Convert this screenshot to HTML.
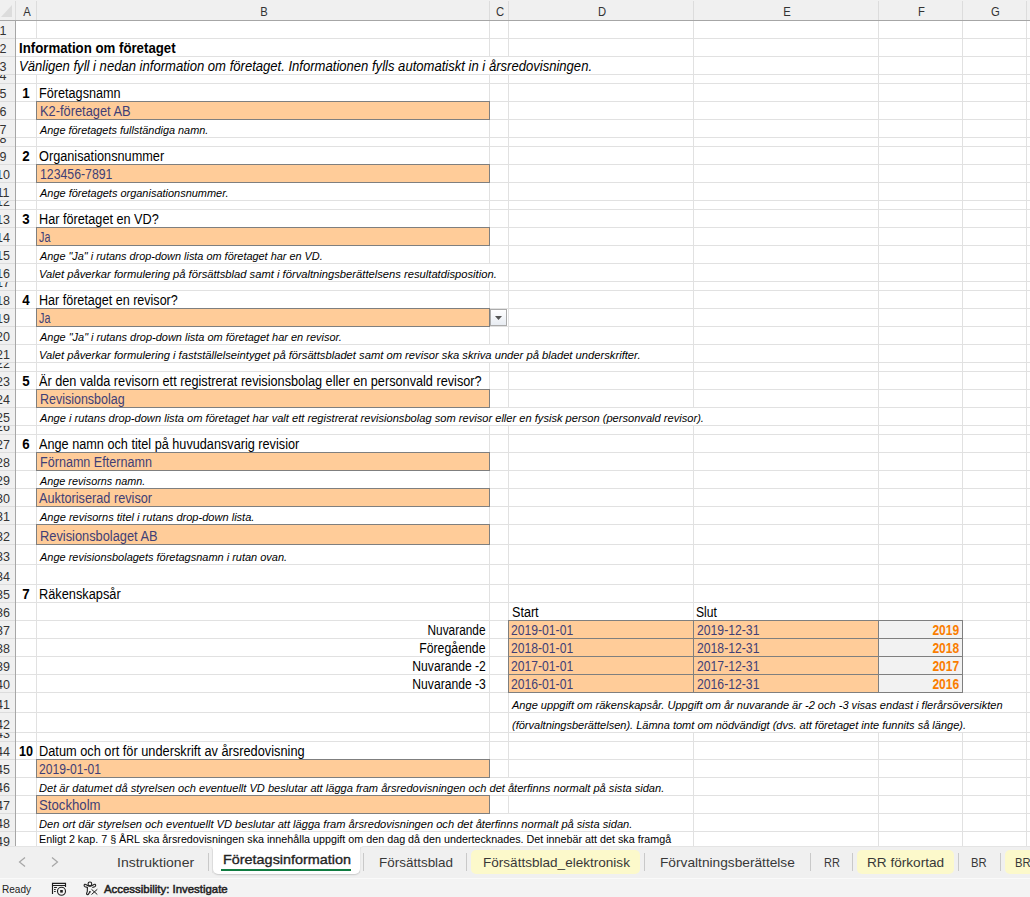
<!DOCTYPE html><html><head><meta charset="utf-8"><style>
html,body{margin:0;padding:0;}body{width:1030px;height:897px;overflow:hidden;position:relative;background:#fff;font-family:"Liberation Sans",sans-serif;}
.a{position:absolute;}.t{position:absolute;white-space:nowrap;line-height:20px;transform-origin:0 0;}
.h{position:absolute;top:2px;height:20px;line-height:20px;font-size:12.5px;color:#333;text-align:center;transform:scaleX(0.9);}
.rn{position:absolute;left:-17px;width:40px;overflow:hidden;}
.rn div{position:absolute;left:0;width:40px;text-align:center;font-size:12.5px;line-height:20px;color:#333;}
</style></head><body>
<div class="a" style="left:0;top:0;width:1030px;height:20px;background:#F0F0F0"></div>
<div class="a" style="left:0;top:20px;width:15px;height:826px;background:#F0F0F0"></div>
<svg class="a" style="left:0;top:0" width="15" height="20"><polygon points="12,5 12,17 1,17" fill="#DCDCDC"/></svg>
<div class="a" style="left:36px;top:1px;width:1px;height:19px;background:#DCDCDC"></div>
<div class="a" style="left:489px;top:1px;width:1px;height:19px;background:#DCDCDC"></div>
<div class="a" style="left:508px;top:1px;width:1px;height:19px;background:#DCDCDC"></div>
<div class="a" style="left:693px;top:1px;width:1px;height:19px;background:#DCDCDC"></div>
<div class="a" style="left:878px;top:1px;width:1px;height:19px;background:#DCDCDC"></div>
<div class="a" style="left:962px;top:1px;width:1px;height:19px;background:#DCDCDC"></div>
<div class="a" style="left:1026px;top:1px;width:1px;height:19px;background:#DCDCDC"></div>
<div class="h" style="left:16.6px;width:20px">A</div>
<div class="h" style="left:37.6px;width:452px">B</div>
<div class="h" style="left:490.6px;width:18px">C</div>
<div class="h" style="left:509.6px;width:184px">D</div>
<div class="h" style="left:694.6px;width:184px">E</div>
<div class="h" style="left:879.6px;width:83px">F</div>
<div class="h" style="left:963.6px;width:63px">G</div>
<div class="a" style="left:16px;top:38px;width:1014px;height:1px;background:#E1E1E1"></div>
<div class="a" style="left:0;top:38px;width:15px;height:1px;background:#DCDCDC"></div>
<div class="a" style="left:16px;top:56px;width:1014px;height:1px;background:#E1E1E1"></div>
<div class="a" style="left:0;top:56px;width:15px;height:1px;background:#DCDCDC"></div>
<div class="a" style="left:16px;top:74px;width:1014px;height:1px;background:#E1E1E1"></div>
<div class="a" style="left:0;top:74px;width:15px;height:1px;background:#DCDCDC"></div>
<div class="a" style="left:16px;top:83px;width:1014px;height:1px;background:#E1E1E1"></div>
<div class="a" style="left:0;top:83px;width:15px;height:1px;background:#DCDCDC"></div>
<div class="a" style="left:16px;top:101px;width:1014px;height:1px;background:#E1E1E1"></div>
<div class="a" style="left:0;top:101px;width:15px;height:1px;background:#DCDCDC"></div>
<div class="a" style="left:16px;top:119px;width:1014px;height:1px;background:#E1E1E1"></div>
<div class="a" style="left:0;top:119px;width:15px;height:1px;background:#DCDCDC"></div>
<div class="a" style="left:16px;top:137px;width:1014px;height:1px;background:#E1E1E1"></div>
<div class="a" style="left:0;top:137px;width:15px;height:1px;background:#DCDCDC"></div>
<div class="a" style="left:16px;top:146px;width:1014px;height:1px;background:#E1E1E1"></div>
<div class="a" style="left:0;top:146px;width:15px;height:1px;background:#DCDCDC"></div>
<div class="a" style="left:16px;top:164px;width:1014px;height:1px;background:#E1E1E1"></div>
<div class="a" style="left:0;top:164px;width:15px;height:1px;background:#DCDCDC"></div>
<div class="a" style="left:16px;top:182px;width:1014px;height:1px;background:#E1E1E1"></div>
<div class="a" style="left:0;top:182px;width:15px;height:1px;background:#DCDCDC"></div>
<div class="a" style="left:16px;top:200px;width:1014px;height:1px;background:#E1E1E1"></div>
<div class="a" style="left:0;top:200px;width:15px;height:1px;background:#DCDCDC"></div>
<div class="a" style="left:16px;top:209px;width:1014px;height:1px;background:#E1E1E1"></div>
<div class="a" style="left:0;top:209px;width:15px;height:1px;background:#DCDCDC"></div>
<div class="a" style="left:16px;top:227px;width:1014px;height:1px;background:#E1E1E1"></div>
<div class="a" style="left:0;top:227px;width:15px;height:1px;background:#DCDCDC"></div>
<div class="a" style="left:16px;top:245px;width:1014px;height:1px;background:#E1E1E1"></div>
<div class="a" style="left:0;top:245px;width:15px;height:1px;background:#DCDCDC"></div>
<div class="a" style="left:16px;top:263px;width:1014px;height:1px;background:#E1E1E1"></div>
<div class="a" style="left:0;top:263px;width:15px;height:1px;background:#DCDCDC"></div>
<div class="a" style="left:16px;top:281px;width:1014px;height:1px;background:#E1E1E1"></div>
<div class="a" style="left:0;top:281px;width:15px;height:1px;background:#DCDCDC"></div>
<div class="a" style="left:16px;top:290px;width:1014px;height:1px;background:#E1E1E1"></div>
<div class="a" style="left:0;top:290px;width:15px;height:1px;background:#DCDCDC"></div>
<div class="a" style="left:16px;top:308px;width:1014px;height:1px;background:#E1E1E1"></div>
<div class="a" style="left:0;top:308px;width:15px;height:1px;background:#DCDCDC"></div>
<div class="a" style="left:16px;top:326px;width:1014px;height:1px;background:#E1E1E1"></div>
<div class="a" style="left:0;top:326px;width:15px;height:1px;background:#DCDCDC"></div>
<div class="a" style="left:16px;top:344px;width:1014px;height:1px;background:#E1E1E1"></div>
<div class="a" style="left:0;top:344px;width:15px;height:1px;background:#DCDCDC"></div>
<div class="a" style="left:16px;top:362px;width:1014px;height:1px;background:#E1E1E1"></div>
<div class="a" style="left:0;top:362px;width:15px;height:1px;background:#DCDCDC"></div>
<div class="a" style="left:16px;top:371px;width:1014px;height:1px;background:#E1E1E1"></div>
<div class="a" style="left:0;top:371px;width:15px;height:1px;background:#DCDCDC"></div>
<div class="a" style="left:16px;top:389px;width:1014px;height:1px;background:#E1E1E1"></div>
<div class="a" style="left:0;top:389px;width:15px;height:1px;background:#DCDCDC"></div>
<div class="a" style="left:16px;top:407px;width:1014px;height:1px;background:#E1E1E1"></div>
<div class="a" style="left:0;top:407px;width:15px;height:1px;background:#DCDCDC"></div>
<div class="a" style="left:16px;top:425px;width:1014px;height:1px;background:#E1E1E1"></div>
<div class="a" style="left:0;top:425px;width:15px;height:1px;background:#DCDCDC"></div>
<div class="a" style="left:16px;top:434px;width:1014px;height:1px;background:#E1E1E1"></div>
<div class="a" style="left:0;top:434px;width:15px;height:1px;background:#DCDCDC"></div>
<div class="a" style="left:16px;top:452px;width:1014px;height:1px;background:#E1E1E1"></div>
<div class="a" style="left:0;top:452px;width:15px;height:1px;background:#DCDCDC"></div>
<div class="a" style="left:16px;top:470px;width:1014px;height:1px;background:#E1E1E1"></div>
<div class="a" style="left:0;top:470px;width:15px;height:1px;background:#DCDCDC"></div>
<div class="a" style="left:16px;top:488px;width:1014px;height:1px;background:#E1E1E1"></div>
<div class="a" style="left:0;top:488px;width:15px;height:1px;background:#DCDCDC"></div>
<div class="a" style="left:16px;top:506px;width:1014px;height:1px;background:#E1E1E1"></div>
<div class="a" style="left:0;top:506px;width:15px;height:1px;background:#DCDCDC"></div>
<div class="a" style="left:16px;top:524px;width:1014px;height:1px;background:#E1E1E1"></div>
<div class="a" style="left:0;top:524px;width:15px;height:1px;background:#DCDCDC"></div>
<div class="a" style="left:16px;top:544px;width:1014px;height:1px;background:#E1E1E1"></div>
<div class="a" style="left:0;top:544px;width:15px;height:1px;background:#DCDCDC"></div>
<div class="a" style="left:16px;top:564px;width:1014px;height:1px;background:#E1E1E1"></div>
<div class="a" style="left:0;top:564px;width:15px;height:1px;background:#DCDCDC"></div>
<div class="a" style="left:16px;top:584px;width:1014px;height:1px;background:#E1E1E1"></div>
<div class="a" style="left:0;top:584px;width:15px;height:1px;background:#DCDCDC"></div>
<div class="a" style="left:16px;top:602px;width:1014px;height:1px;background:#E1E1E1"></div>
<div class="a" style="left:0;top:602px;width:15px;height:1px;background:#DCDCDC"></div>
<div class="a" style="left:16px;top:620px;width:1014px;height:1px;background:#E1E1E1"></div>
<div class="a" style="left:0;top:620px;width:15px;height:1px;background:#DCDCDC"></div>
<div class="a" style="left:16px;top:638px;width:1014px;height:1px;background:#E1E1E1"></div>
<div class="a" style="left:0;top:638px;width:15px;height:1px;background:#DCDCDC"></div>
<div class="a" style="left:16px;top:656px;width:1014px;height:1px;background:#E1E1E1"></div>
<div class="a" style="left:0;top:656px;width:15px;height:1px;background:#DCDCDC"></div>
<div class="a" style="left:16px;top:674px;width:1014px;height:1px;background:#E1E1E1"></div>
<div class="a" style="left:0;top:674px;width:15px;height:1px;background:#DCDCDC"></div>
<div class="a" style="left:16px;top:692px;width:1014px;height:1px;background:#E1E1E1"></div>
<div class="a" style="left:0;top:692px;width:15px;height:1px;background:#DCDCDC"></div>
<div class="a" style="left:16px;top:712px;width:1014px;height:1px;background:#E1E1E1"></div>
<div class="a" style="left:0;top:712px;width:15px;height:1px;background:#DCDCDC"></div>
<div class="a" style="left:16px;top:732px;width:1014px;height:1px;background:#E1E1E1"></div>
<div class="a" style="left:0;top:732px;width:15px;height:1px;background:#DCDCDC"></div>
<div class="a" style="left:16px;top:741px;width:1014px;height:1px;background:#E1E1E1"></div>
<div class="a" style="left:0;top:741px;width:15px;height:1px;background:#DCDCDC"></div>
<div class="a" style="left:16px;top:759px;width:1014px;height:1px;background:#E1E1E1"></div>
<div class="a" style="left:0;top:759px;width:15px;height:1px;background:#DCDCDC"></div>
<div class="a" style="left:16px;top:777px;width:1014px;height:1px;background:#E1E1E1"></div>
<div class="a" style="left:0;top:777px;width:15px;height:1px;background:#DCDCDC"></div>
<div class="a" style="left:16px;top:795px;width:1014px;height:1px;background:#E1E1E1"></div>
<div class="a" style="left:0;top:795px;width:15px;height:1px;background:#DCDCDC"></div>
<div class="a" style="left:16px;top:813px;width:1014px;height:1px;background:#E1E1E1"></div>
<div class="a" style="left:0;top:813px;width:15px;height:1px;background:#DCDCDC"></div>
<div class="a" style="left:16px;top:831px;width:1014px;height:1px;background:#E1E1E1"></div>
<div class="a" style="left:0;top:831px;width:15px;height:1px;background:#DCDCDC"></div>
<div class="a" style="left:36px;top:21px;width:1px;height:825px;background:#E1E1E1"></div>
<div class="a" style="left:489px;top:21px;width:1px;height:825px;background:#E1E1E1"></div>
<div class="a" style="left:508px;top:21px;width:1px;height:825px;background:#E1E1E1"></div>
<div class="a" style="left:693px;top:21px;width:1px;height:825px;background:#E1E1E1"></div>
<div class="a" style="left:878px;top:21px;width:1px;height:825px;background:#E1E1E1"></div>
<div class="a" style="left:962px;top:21px;width:1px;height:825px;background:#E1E1E1"></div>
<div class="a" style="left:1026px;top:21px;width:1px;height:825px;background:#E1E1E1"></div>
<div class="a" style="left:16px;top:39px;width:473px;height:17px;background:#fff"></div>
<div class="a" style="left:16px;top:57px;width:677px;height:17px;background:#fff"></div>
<div class="a" style="left:37px;top:264px;width:471px;height:17px;background:#fff"></div>
<div class="a" style="left:37px;top:345px;width:656px;height:17px;background:#fff"></div>
<div class="a" style="left:37px;top:408px;width:841px;height:17px;background:#fff"></div>
<div class="a" style="left:509px;top:693px;width:517px;height:19px;background:#fff"></div>
<div class="a" style="left:509px;top:713px;width:517px;height:19px;background:#fff"></div>
<div class="a" style="left:37px;top:778px;width:656px;height:17px;background:#fff"></div>
<div class="a" style="left:37px;top:814px;width:656px;height:17px;background:#fff"></div>
<div class="a" style="left:37px;top:832px;width:656px;height:17px;background:#fff"></div>
<div class="a" style="left:0;top:20px;width:1030px;height:1px;background:#A6A6A6"></div>
<div class="a" style="left:15px;top:20px;width:1px;height:826px;background:#A6A6A6"></div>
<div class="a" style="left:15px;top:1px;width:1px;height:19px;background:#DCDCDC"></div>
<div class="rn" style="top:21px;height:17px"><div style="top:-0.33px">1</div></div>
<div class="rn" style="top:39px;height:17px"><div style="top:-0.33px">2</div></div>
<div class="rn" style="top:57px;height:17px"><div style="top:-0.33px">3</div></div>
<div class="rn" style="top:75px;height:8px"><div style="top:-9.33px">4</div></div>
<div class="rn" style="top:84px;height:17px"><div style="top:-0.33px">5</div></div>
<div class="rn" style="top:102px;height:17px"><div style="top:-0.33px">6</div></div>
<div class="rn" style="top:120px;height:17px"><div style="top:-0.33px">7</div></div>
<div class="rn" style="top:138px;height:8px"><div style="top:-9.33px">8</div></div>
<div class="rn" style="top:147px;height:17px"><div style="top:-0.33px">9</div></div>
<div class="rn" style="top:165px;height:17px"><div style="top:-0.33px">10</div></div>
<div class="rn" style="top:183px;height:17px"><div style="top:-0.33px">11</div></div>
<div class="rn" style="top:201px;height:8px"><div style="top:-9.33px">12</div></div>
<div class="rn" style="top:210px;height:17px"><div style="top:-0.33px">13</div></div>
<div class="rn" style="top:228px;height:17px"><div style="top:-0.33px">14</div></div>
<div class="rn" style="top:246px;height:17px"><div style="top:-0.33px">15</div></div>
<div class="rn" style="top:264px;height:17px"><div style="top:-0.33px">16</div></div>
<div class="rn" style="top:282px;height:8px"><div style="top:-9.33px">17</div></div>
<div class="rn" style="top:291px;height:17px"><div style="top:-0.33px">18</div></div>
<div class="rn" style="top:309px;height:17px"><div style="top:-0.33px">19</div></div>
<div class="rn" style="top:327px;height:17px"><div style="top:-0.33px">20</div></div>
<div class="rn" style="top:345px;height:17px"><div style="top:-0.33px">21</div></div>
<div class="rn" style="top:363px;height:8px"><div style="top:-9.33px">22</div></div>
<div class="rn" style="top:372px;height:17px"><div style="top:-0.33px">23</div></div>
<div class="rn" style="top:390px;height:17px"><div style="top:-0.33px">24</div></div>
<div class="rn" style="top:408px;height:17px"><div style="top:-0.33px">25</div></div>
<div class="rn" style="top:426px;height:8px"><div style="top:-9.33px">26</div></div>
<div class="rn" style="top:435px;height:17px"><div style="top:-0.33px">27</div></div>
<div class="rn" style="top:453px;height:17px"><div style="top:-0.33px">28</div></div>
<div class="rn" style="top:471px;height:17px"><div style="top:-0.33px">29</div></div>
<div class="rn" style="top:489px;height:17px"><div style="top:-0.33px">30</div></div>
<div class="rn" style="top:507px;height:17px"><div style="top:-0.33px">31</div></div>
<div class="rn" style="top:525px;height:19px"><div style="top:1.67px">32</div></div>
<div class="rn" style="top:545px;height:19px"><div style="top:1.67px">33</div></div>
<div class="rn" style="top:565px;height:19px"><div style="top:1.67px">34</div></div>
<div class="rn" style="top:585px;height:17px"><div style="top:-0.33px">35</div></div>
<div class="rn" style="top:603px;height:17px"><div style="top:-0.33px">36</div></div>
<div class="rn" style="top:621px;height:17px"><div style="top:-0.33px">37</div></div>
<div class="rn" style="top:639px;height:17px"><div style="top:-0.33px">38</div></div>
<div class="rn" style="top:657px;height:17px"><div style="top:-0.33px">39</div></div>
<div class="rn" style="top:675px;height:17px"><div style="top:-0.33px">40</div></div>
<div class="rn" style="top:693px;height:19px"><div style="top:1.67px">41</div></div>
<div class="rn" style="top:713px;height:19px"><div style="top:1.67px">42</div></div>
<div class="rn" style="top:733px;height:8px"><div style="top:-9.33px">43</div></div>
<div class="rn" style="top:742px;height:17px"><div style="top:-0.33px">44</div></div>
<div class="rn" style="top:760px;height:17px"><div style="top:-0.33px">45</div></div>
<div class="rn" style="top:778px;height:17px"><div style="top:-0.33px">46</div></div>
<div class="rn" style="top:796px;height:17px"><div style="top:-0.33px">47</div></div>
<div class="rn" style="top:814px;height:17px"><div style="top:-0.33px">48</div></div>
<div class="rn" style="top:832px;height:17px"><div style="top:-0.33px">49</div></div>
<div class="a" style="left:36px;top:101px;width:452px;height:17px;background:#FFCC99;border:1px solid #7F7F7F"></div>
<div class="a" style="left:36px;top:164px;width:452px;height:17px;background:#FFCC99;border:1px solid #7F7F7F"></div>
<div class="a" style="left:36px;top:227px;width:452px;height:17px;background:#FFCC99;border:1px solid #7F7F7F"></div>
<div class="a" style="left:36px;top:308px;width:452px;height:17px;background:#FFCC99;border:1px solid #7F7F7F"></div>
<div class="a" style="left:36px;top:389px;width:452px;height:17px;background:#FFCC99;border:1px solid #7F7F7F"></div>
<div class="a" style="left:36px;top:452px;width:452px;height:17px;background:#FFCC99;border:1px solid #7F7F7F"></div>
<div class="a" style="left:36px;top:488px;width:452px;height:17px;background:#FFCC99;border:1px solid #7F7F7F"></div>
<div class="a" style="left:36px;top:524px;width:452px;height:19px;background:#FFCC99;border:1px solid #7F7F7F"></div>
<div class="a" style="left:36px;top:759px;width:452px;height:17px;background:#FFCC99;border:1px solid #7F7F7F"></div>
<div class="a" style="left:36px;top:795px;width:452px;height:17px;background:#FFCC99;border:1px solid #7F7F7F"></div>
<div class="a" style="left:508px;top:620px;width:184px;height:17px;background:#FFCC99;border:1px solid #7F7F7F"></div>
<div class="a" style="left:693px;top:620px;width:184px;height:17px;background:#FFCC99;border:1px solid #7F7F7F"></div>
<div class="a" style="left:508px;top:638px;width:184px;height:17px;background:#FFCC99;border:1px solid #7F7F7F"></div>
<div class="a" style="left:693px;top:638px;width:184px;height:17px;background:#FFCC99;border:1px solid #7F7F7F"></div>
<div class="a" style="left:508px;top:656px;width:184px;height:17px;background:#FFCC99;border:1px solid #7F7F7F"></div>
<div class="a" style="left:693px;top:656px;width:184px;height:17px;background:#FFCC99;border:1px solid #7F7F7F"></div>
<div class="a" style="left:508px;top:674px;width:184px;height:17px;background:#FFCC99;border:1px solid #7F7F7F"></div>
<div class="a" style="left:693px;top:674px;width:184px;height:17px;background:#FFCC99;border:1px solid #7F7F7F"></div>
<div class="a" style="left:878px;top:620px;width:83px;height:17px;background:#F2F2F2;border:1px solid #7F7F7F"></div>
<div class="a" style="left:878px;top:638px;width:83px;height:17px;background:#F2F2F2;border:1px solid #7F7F7F"></div>
<div class="a" style="left:878px;top:656px;width:83px;height:17px;background:#F2F2F2;border:1px solid #7F7F7F"></div>
<div class="a" style="left:878px;top:674px;width:83px;height:17px;background:#F2F2F2;border:1px solid #7F7F7F"></div>
<div class="a" style="left:490px;top:309px;width:15px;height:15px;border:1px solid #ABABAB;background:linear-gradient(#FFFFFF,#E8ECF2)"></div>
<svg class="a" style="left:494px;top:315px" width="9" height="6"><polygon points="1,1 8,1 4.5,5" fill="#555"/></svg>
<div class="a" style="left:0;top:866px;width:1030px;height:12px;background:#F0F0F0"></div>
<div class="a" style="left:-10px;top:846px;width:222px;height:31px;background:#F0F0F0;border-top-right-radius:5px;border-top:1px solid #E4E4E4;border-right:1px solid #E4E4E4"></div>
<div class="a" style="left:359px;top:846px;width:700px;height:31px;background:#F0F0F0;border-top-left-radius:5px;border-top:1px solid #E4E4E4;border-left:1px solid #E4E4E4"></div>
<div class="a" style="left:0;top:873px;width:1030px;height:5px;background:#F0F0F0"></div>
<div class="a" style="left:0;top:878px;width:1030px;height:1px;background:#FAFAFA"></div>
<div class="a" style="left:0;top:879px;width:1030px;height:18px;background:#F3F3F3"></div>
<svg class="a" style="left:0;top:846px" width="80" height="32"><polyline points="25,11.5 19.5,16 25,20.5" fill="none" stroke="#A6A6A6" stroke-width="1.2"/><polyline points="52,11.5 57.5,16 52,20.5" fill="none" stroke="#A6A6A6" stroke-width="1.2"/></svg>
<div class="a" style="left:208px;top:853px;width:1px;height:18px;background:#C9C9C9"></div>
<div class="a" style="left:363px;top:853px;width:1px;height:18px;background:#C9C9C9"></div>
<div class="a" style="left:466px;top:853px;width:1px;height:18px;background:#C9C9C9"></div>
<div class="a" style="left:644px;top:853px;width:1px;height:18px;background:#C9C9C9"></div>
<div class="a" style="left:810px;top:853px;width:1px;height:18px;background:#C9C9C9"></div>
<div class="a" style="left:852px;top:853px;width:1px;height:18px;background:#C9C9C9"></div>
<div class="a" style="left:958px;top:853px;width:1px;height:18px;background:#C9C9C9"></div>
<div class="a" style="left:1000px;top:853px;width:1px;height:18px;background:#C9C9C9"></div>
<div class="a" style="left:212.5px;top:846px;width:147px;height:28px;background:#FFFFFF;border-radius:0 0 5px 5px;box-shadow:0 0.5px 1.5px rgba(0,0,0,0.16)"></div>
<div class="a" style="left:208px;top:840px;width:156px;height:6px;background:#FFFFFF"></div>
<div class="a" style="left:221px;top:869px;width:130px;height:2px;background:#107C41"></div>
<div class="a" style="left:471px;top:850px;width:169px;height:24px;background:#FCF9CB;border-radius:5px"></div>
<div class="a" style="left:857px;top:850px;width:97px;height:24px;background:#FCF9CB;border-radius:5px"></div>
<div class="a" style="left:1005px;top:850px;width:35px;height:24px;background:#FCF9CB;border-radius:5px"></div>
<svg class="a" style="left:48px;top:879px" width="22" height="18"><path d="M4.5 15 V4.4 H17.5 V8 M4.5 6.5 H17.5" stroke="#1E1E1E" stroke-width="1.15" fill="none"/><path d="M6.1 8.5 H8.9 M6.1 10.5 H7.7 M6.1 12.5 H7.7" stroke="#1E1E1E" stroke-width="1.05"/><circle cx="13.5" cy="12.3" r="4" stroke="#1E1E1E" stroke-width="1.1" fill="none"/><rect x="12.2" y="11" width="2.6" height="2.6" fill="#1E1E1E"/></svg>
<svg class="a" style="left:80px;top:879px" width="22" height="18"><circle cx="9.9" cy="4.9" r="1.85" stroke="#1E1E1E" stroke-width="1.1" fill="none"/><path d="M8.6 6.9 Q9.9 7.4 11.2 6.9 L14 5.4 Q15.3 4.9 15.7 6.1 Q15.9 7.2 14.7 7.7 L12.3 8.6 M8.6 6.9 L5.8 5.4 Q4.5 4.9 4.1 6.1 Q3.9 7.2 5.1 7.7 L7.4 8.5 L7.3 12.5 L6.6 14.3 Q6.4 15.6 7.5 15.7 Q8.2 15.6 8.8 14.6 L9.6 13.2" stroke="#1E1E1E" stroke-width="1.1" fill="none"/><circle cx="9.9" cy="12.8" r="0.9" fill="#1E1E1E"/><path d="M11.5 10.3 L17.3 15.5 M17.3 10.3 L11.5 15.5" stroke="#1E1E1E" stroke-width="1"/></svg>
<div id="t0" class="t" style="left:18.80px;top:38.37px;font-weight:bold;font-size:14px;color:#000;transform:scaleX(0.9452)">Information om företaget</div>
<div id="t1" class="t" style="left:18.80px;top:56.37px;font-style:italic;font-size:14px;color:#000;transform:scaleX(0.9333)">Vänligen fyll i nedan information om företaget. Informationen fylls automatiskt in i årsredovisningen.</div>
<div id="t2" class="t" style="left:15.90px;width:20px;text-align:center;top:83.37px;font-weight:bold;font-size:14px;color:#000;transform-origin:50% 0;transform:scaleX(0.9500)">1</div>
<div id="t3" class="t" style="left:16.40px;width:20px;text-align:center;top:146.37px;font-weight:bold;font-size:14px;color:#000;transform-origin:50% 0;transform:scaleX(0.9500)">2</div>
<div id="t4" class="t" style="left:16.40px;width:20px;text-align:center;top:209.37px;font-weight:bold;font-size:14px;color:#000;transform-origin:50% 0;transform:scaleX(0.9500)">3</div>
<div id="t5" class="t" style="left:16.40px;width:20px;text-align:center;top:290.37px;font-weight:bold;font-size:14px;color:#000;transform-origin:50% 0;transform:scaleX(0.9500)">4</div>
<div id="t6" class="t" style="left:16.40px;width:20px;text-align:center;top:371.37px;font-weight:bold;font-size:14px;color:#000;transform-origin:50% 0;transform:scaleX(0.9500)">5</div>
<div id="t7" class="t" style="left:16.40px;width:20px;text-align:center;top:434.37px;font-weight:bold;font-size:14px;color:#000;transform-origin:50% 0;transform:scaleX(0.9500)">6</div>
<div id="t8" class="t" style="left:15.90px;width:20px;text-align:center;top:584.37px;font-weight:bold;font-size:14px;color:#000;transform-origin:50% 0;transform:scaleX(0.9500)">7</div>
<div id="t9" class="t" style="left:16.40px;width:20px;text-align:center;top:741.37px;font-weight:bold;font-size:14px;color:#000;transform-origin:50% 0;transform:scaleX(0.9000)">10</div>
<div id="t10" class="t" style="left:39.00px;top:83.37px;font-size:14px;color:#000;transform:scaleX(0.9045)">Företagsnamn</div>
<div id="t11" class="t" style="left:40.00px;top:101.37px;font-size:14px;color:#3F3F76;transform:scaleX(0.9172)">K2-företaget AB</div>
<div id="t12" class="t" style="left:40.00px;top:120.30px;font-style:italic;font-size:11.2px;color:#000;transform:scaleX(0.9734)">Ange företagets fullständiga namn.</div>
<div id="t13" class="t" style="left:39.00px;top:146.37px;font-size:14px;color:#000;transform:scaleX(0.9087)">Organisationsnummer</div>
<div id="t14" class="t" style="left:40.00px;top:164.37px;font-size:14px;color:#3F3F76;transform:scaleX(0.8780)">123456-7891</div>
<div id="t15" class="t" style="left:40.00px;top:183.30px;font-style:italic;font-size:11.2px;color:#000;transform:scaleX(0.9797)">Ange företagets organisationsnummer.</div>
<div id="t16" class="t" style="left:39.00px;top:209.37px;font-size:14px;color:#000;transform:scaleX(0.9053)">Har företaget en VD?</div>
<div id="t17" class="t" style="left:39.00px;top:227.37px;font-size:14px;color:#3F3F76;transform:scaleX(0.7689)">Ja</div>
<div id="t18" class="t" style="left:40.00px;top:246.30px;font-style:italic;font-size:11.2px;color:#000;transform:scaleX(0.9741)">Ange &quot;Ja&quot; i rutans drop-down lista om företaget har en VD.</div>
<div id="t19" class="t" style="left:39.00px;top:264.30px;font-style:italic;font-size:11.2px;color:#000;transform:scaleX(1.0011)">Valet påverkar formulering på försättsblad samt i förvaltningsberättelsens resultatdisposition.</div>
<div id="t20" class="t" style="left:39.00px;top:290.37px;font-size:14px;color:#000;transform:scaleX(0.8961)">Har företaget en revisor?</div>
<div id="t21" class="t" style="left:39.00px;top:308.37px;font-size:14px;color:#3F3F76;transform:scaleX(0.7689)">Ja</div>
<div id="t22" class="t" style="left:40.00px;top:327.30px;font-style:italic;font-size:11.2px;color:#000;transform:scaleX(0.9802)">Ange &quot;Ja&quot; i rutans drop-down lista om företaget har en revisor.</div>
<div id="t23" class="t" style="left:39.00px;top:345.30px;font-style:italic;font-size:11.2px;color:#000;transform:scaleX(1.0007)">Valet påverkar formulering i fastställelseintyget på försättsbladet samt om revisor ska skriva under på bladet underskrifter.</div>
<div id="t24" class="t" style="left:39.00px;top:371.37px;font-size:14px;color:#000;transform:scaleX(0.9072)">Är den valda revisorn ett registrerat revisionsbolag eller en personvald revisor?</div>
<div id="t25" class="t" style="left:39.60px;top:389.37px;font-size:14px;color:#3F3F76;transform:scaleX(0.8916)">Revisionsbolag</div>
<div id="t26" class="t" style="left:40.00px;top:408.30px;font-style:italic;font-size:11.2px;color:#000;transform:scaleX(0.9933)">Ange i rutans drop-down lista om företaget har valt ett registrerat revisionsbolag som revisor eller en fysisk person (personvald revisor).</div>
<div id="t27" class="t" style="left:39.00px;top:434.37px;font-size:14px;color:#000;transform:scaleX(0.9062)">Ange namn och titel på huvudansvarig revisior</div>
<div id="t28" class="t" style="left:39.60px;top:452.37px;font-size:14px;color:#3F3F76;transform:scaleX(0.8992)">Förnamn Efternamn</div>
<div id="t29" class="t" style="left:40.00px;top:471.30px;font-style:italic;font-size:11.2px;color:#000;transform:scaleX(0.9679)">Ange revisorns namn.</div>
<div id="t30" class="t" style="left:39.00px;top:488.37px;font-size:14px;color:#3F3F76;transform:scaleX(0.9080)">Auktoriserad revisor</div>
<div id="t31" class="t" style="left:40.00px;top:507.30px;font-style:italic;font-size:11.2px;color:#000;transform:scaleX(0.9880)">Ange revisorns titel i rutans drop-down lista.</div>
<div id="t32" class="t" style="left:39.60px;top:526.37px;font-size:14px;color:#3F3F76;transform:scaleX(0.9156)">Revisionsbolaget AB</div>
<div id="t33" class="t" style="left:40.00px;top:547.30px;font-style:italic;font-size:11.2px;color:#000;transform:scaleX(0.9810)">Ange revisionsbolagets företagsnamn i rutan ovan.</div>
<div id="t34" class="t" style="left:39.00px;top:584.37px;font-size:14px;color:#000;transform:scaleX(0.9125)">Räkenskapsår</div>
<div id="t35" class="t" style="left:511.60px;top:602.37px;font-size:14px;color:#000;transform:scaleX(0.9000)">Start</div>
<div id="t36" class="t" style="left:695.80px;top:602.37px;font-size:14px;color:#000;transform:scaleX(0.8642)">Slut</div>
<div id="t37" class="t" style="right:544.20px;top:620.37px;font-size:14px;color:#000;transform-origin:100% 0;transform:scaleX(0.8458)">Nuvarande</div>
<div id="t38" class="t" style="left:510.80px;top:620.37px;font-size:14px;color:#3F3F76;transform:scaleX(0.8681)">2019-01-01</div>
<div id="t39" class="t" style="left:696.60px;top:620.37px;font-size:14px;color:#3F3F76;transform:scaleX(0.8719)">2019-12-31</div>
<div id="t40" class="t" style="right:70.80px;top:620.37px;font-weight:bold;font-size:14px;color:#FA7D00;transform-origin:100% 0;transform:scaleX(0.8587)">2019</div>
<div id="t41" class="t" style="right:544.20px;top:638.37px;font-size:14px;color:#000;transform-origin:100% 0;transform:scaleX(0.8787)">Föregående</div>
<div id="t42" class="t" style="left:510.80px;top:638.37px;font-size:14px;color:#3F3F76;transform:scaleX(0.8681)">2018-01-01</div>
<div id="t43" class="t" style="left:696.60px;top:638.37px;font-size:14px;color:#3F3F76;transform:scaleX(0.8719)">2018-12-31</div>
<div id="t44" class="t" style="right:70.80px;top:638.37px;font-weight:bold;font-size:14px;color:#FA7D00;transform-origin:100% 0;transform:scaleX(0.8587)">2018</div>
<div id="t45" class="t" style="right:544.20px;top:656.37px;font-size:14px;color:#000;transform-origin:100% 0;transform:scaleX(0.8667)">Nuvarande -2</div>
<div id="t46" class="t" style="left:510.80px;top:656.37px;font-size:14px;color:#3F3F76;transform:scaleX(0.8681)">2017-01-01</div>
<div id="t47" class="t" style="left:696.60px;top:656.37px;font-size:14px;color:#3F3F76;transform:scaleX(0.8719)">2017-12-31</div>
<div id="t48" class="t" style="right:70.80px;top:656.37px;font-weight:bold;font-size:14px;color:#FA7D00;transform-origin:100% 0;transform:scaleX(0.8587)">2017</div>
<div id="t49" class="t" style="right:544.20px;top:674.37px;font-size:14px;color:#000;transform-origin:100% 0;transform:scaleX(0.8667)">Nuvarande -3</div>
<div id="t50" class="t" style="left:510.80px;top:674.37px;font-size:14px;color:#3F3F76;transform:scaleX(0.8681)">2016-01-01</div>
<div id="t51" class="t" style="left:696.60px;top:674.37px;font-size:14px;color:#3F3F76;transform:scaleX(0.8719)">2016-12-31</div>
<div id="t52" class="t" style="right:70.80px;top:674.37px;font-weight:bold;font-size:14px;color:#FA7D00;transform-origin:100% 0;transform:scaleX(0.8587)">2016</div>
<div id="t53" class="t" style="left:512.20px;top:695.30px;font-style:italic;font-size:11.2px;color:#000;transform:scaleX(0.9870)">Ange uppgift om räkenskapsår. Uppgift om år nuvarande är -2 och -3 visas endast i flerårsöversikten</div>
<div id="t54" class="t" style="left:512.20px;top:715.30px;font-style:italic;font-size:11.2px;color:#000;transform:scaleX(0.9839)">(förvaltningsberättelsen). Lämna tomt om nödvändigt (dvs. att företaget inte funnits så länge).</div>
<div id="t55" class="t" style="left:39.00px;top:741.37px;font-size:14px;color:#000;transform:scaleX(0.9127)">Datum och ort för underskrift av årsredovisning</div>
<div id="t56" class="t" style="left:39.00px;top:759.37px;font-size:14px;color:#3F3F76;transform:scaleX(0.8664)">2019-01-01</div>
<div id="t57" class="t" style="left:39.00px;top:778.30px;font-style:italic;font-size:11.2px;color:#000;transform:scaleX(0.9896)">Det är datumet då styrelsen och eventuellt VD beslutar att lägga fram årsredovisningen och det återfinns normalt på sista sidan.</div>
<div id="t58" class="t" style="left:39.00px;top:795.37px;font-size:14px;color:#3F3F76;transform:scaleX(0.9416)">Stockholm</div>
<div id="t59" class="t" style="left:39.00px;top:814.30px;font-style:italic;font-size:11.2px;color:#000;transform:scaleX(0.9918)">Den ort där styrelsen och eventuellt VD beslutar att lägga fram årsredovisningen och det återfinns normalt på sista sidan.</div>
<div id="t60" class="t" style="left:39.00px;top:829.47px;font-size:10.67px;color:#000;transform:scaleX(1.0093)">Enligt 2 kap. 7 § ÅRL ska årsredovisningen ska innehålla uppgift om den dag då den undertecknades. Det innebär att det ska framgå</div>
<div id="t61" class="t" style="left:116.50px;top:852.94px;font-size:13.5px;color:#383838;transform:scaleX(1.0380)">Instruktioner</div>
<div id="t62" class="t" style="left:223.10px;top:849.74px;font-size:13.5px;-webkit-text-stroke:0.35px currentColor;color:#242424;transform:scaleX(1.0667)">Företagsinformation</div>
<div id="t63" class="t" style="left:379.20px;top:852.94px;font-size:13.5px;color:#383838;transform:scaleX(0.9974)">Försättsblad</div>
<div id="t64" class="t" style="left:483.10px;top:852.94px;font-size:13.5px;color:#383838;transform:scaleX(1.0041)">Försättsblad_elektronisk</div>
<div id="t65" class="t" style="left:660.20px;top:852.94px;font-size:13.5px;color:#383838;transform:scaleX(1.0153)">Förvaltningsberättelse</div>
<div id="t66" class="t" style="left:823.50px;top:852.94px;font-size:13.5px;color:#383838;transform:scaleX(0.8125)">RR</div>
<div id="t67" class="t" style="left:866.90px;top:852.94px;font-size:13.5px;color:#383838;transform:scaleX(1.0080)">RR förkortad</div>
<div id="t68" class="t" style="left:971.20px;top:852.94px;font-size:13.5px;color:#383838;transform:scaleX(0.8342)">BR</div>
<div id="t69" class="t" style="left:1015.20px;top:852.94px;font-size:13.5px;color:#383838;transform:scaleX(0.8342)">BR</div>
<div id="t70" class="t" style="left:2.10px;top:879.40px;font-size:11.5px;color:#222;transform:scaleX(0.8739)">Ready</div>
<div id="t71" class="t" style="left:103.50px;top:879.10px;font-size:11.5px;-webkit-text-stroke:0.5px currentColor;color:#222;transform:scaleX(0.9921)">Accessibility: Investigate</div>
</body></html>
